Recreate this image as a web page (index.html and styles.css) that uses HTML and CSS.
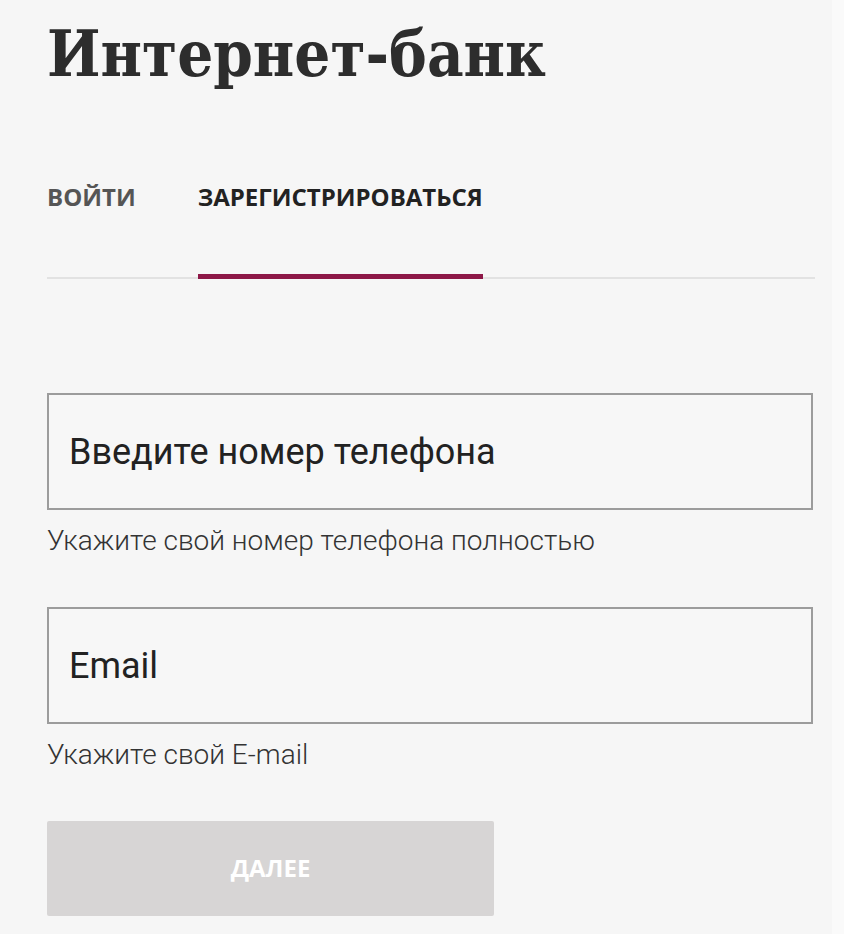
FILE: index.html
```html
<!DOCTYPE html>
<html lang="ru">
<head>
    <meta charset="UTF-8">
    <title>Интернет-банк</title>
    <link rel="stylesheet" href="styles.css">
</head>
<body>
    <div class="page">
        <h1 class="title">Интернет-банк</h1>

        <div class="tabs">
            <a class="tab">Войти</a>
            <a class="tab tab-active">Зарегистрироваться</a>
        </div>

        <form class="reg-form" onsubmit="return false">
            <div class="field">
                <input class="field-input" type="tel" placeholder="Введите номер телефона">
                <div class="field-hint">Укажите свой номер телефона полностью</div>
            </div>
            <div class="field">
                <input class="field-input" type="email" placeholder="Email">
                <div class="field-hint">Укажите свой E-mail</div>
            </div>
            <button class="btn-next" type="submit" disabled>Далее</button>
        </form>
    </div>
</body>
</html>
```

FILE: styles.css
```css
body {
    margin: 0;
    background-color: #fafafa;
    font-family: Roboto, "Liberation Sans", sans-serif;
}

.page {
    width: 768px;
    padding: 0 17px 0 47px;
    min-height: 934px;
    background-color: #f6f6f6;
}

.title {
    margin: 0;
    padding-top: 14px;
    font-family: "DejaVu Serif Condensed", "DejaVu Serif", serif;
    font-weight: bold;
    font-size: 63px;
    line-height: 80px;
    color: #2d2d2d;
}

.tabs {
    display: flex;
    gap: 62px;
    margin-top: 86px;
    border-bottom: 2px solid #e2e2e2;
}

.tab {
    font-family: "Open Sans", sans-serif;
    font-weight: bold;
    font-size: 24px;
    text-transform: uppercase;
    color: #555;
    padding-bottom: 61px;
    margin-bottom: -2px;
    border-bottom: 5px solid transparent;
    cursor: pointer;
}

.tab-active {
    color: #222;
    border-bottom-color: #8d1847;
}

.reg-form {
    margin-top: 114px;
}

.field {
    margin-bottom: 50px;
}

.field-input {
    display: block;
    box-sizing: border-box;
    width: 766px;
    height: 117px;
    padding: 0 20px;
    border: 2px solid #9c9c9c;
    background-color: #f7f7f7;
    font-family: Roboto, sans-serif;
    font-size: 36px;
    color: #222;
    outline: none;
}

.field-input::placeholder {
    color: #222;
}

.field-hint {
    margin-top: 15px;
    font-size: 28px;
    font-weight: 300;
    line-height: 32px;
    color: #333;
}

.btn-next {
    display: block;
    width: 447px;
    height: 95px;
    border: none;
    border-radius: 2px;
    background-color: #d7d5d5;
    color: #fff;
    font-family: "Open Sans", sans-serif;
    font-weight: bold;
    font-size: 24px;
    text-transform: uppercase;
    padding-bottom: 4px;
}
```
